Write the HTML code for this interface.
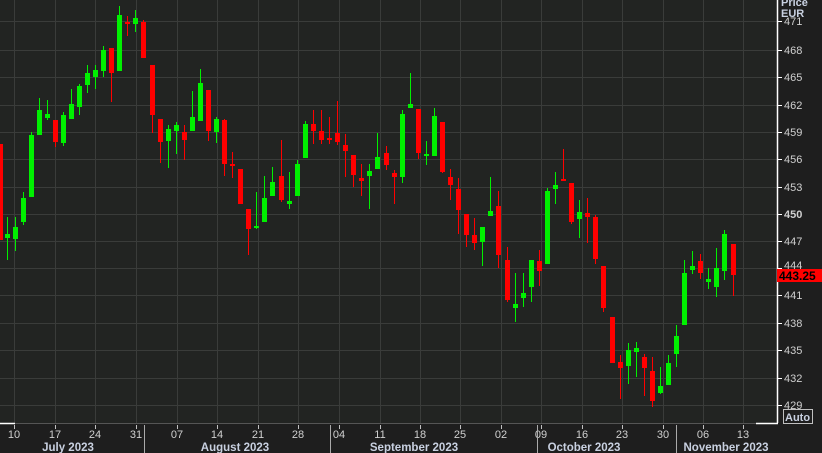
<!DOCTYPE html>
<html><head><meta charset="utf-8"><style>
html,body{margin:0;padding:0;background:#1e1e1e;overflow:hidden}
body{width:822px;height:453px;position:relative;font-family:"Liberation Sans","DejaVu Sans",sans-serif}
svg{position:absolute;left:0;top:0}
</style></head><body>
<svg id="s" width="822" height="453" xmlns="http://www.w3.org/2000/svg">
<rect x="0" y="0" width="777" height="423" fill="#222422"/>
<g id="grid" stroke="#3a3c3a" stroke-width="1"></g>
<g id="c"></g>
<line x1="777.5" y1="0" x2="777.5" y2="423" stroke="#fff" stroke-width="1.5"/>
<line x1="0" y1="423.5" x2="777" y2="423.5" stroke="#555" stroke-width="1"/>
<line x1="0" y1="423.5" x2="15" y2="423.5" stroke="#fff" stroke-width="1.5"/>
<line x1="756" y1="423.5" x2="778" y2="423.5" stroke="#fff" stroke-width="1.5"/>
<g id="ax" font-size="11" fill="#d0d0d0"></g>
<text x="781" y="6" font-size="11" font-weight="bold" fill="#c8d0e0">Price</text>
<text x="781" y="17" font-size="11" font-weight="bold" fill="#c8d0e0">EUR</text>
<rect x="777" y="269" width="45" height="13" fill="#ff0000"/>
<text x="779" y="280" font-size="12" font-weight="bold" fill="#000">443.25</text>
<rect x="783.5" y="409.5" width="29" height="14" fill="none" stroke="#c0c0c0"/>
<text x="785" y="421" font-size="11" font-weight="bold" fill="#c8d0e0">Auto</text>
<g font-size="11.5" font-weight="bold" fill="#c8d0e0" text-anchor="middle">
<text x="68" y="451">July 2023</text>
<text x="235" y="451">August 2023</text>
<text x="414" y="451">September 2023</text>
<text x="584" y="451">October 2023</text>
<text x="726" y="451">November 2023</text>
</g>
</svg>
<script>
var NS="http://www.w3.org/2000/svg";
function el(p,t,a,txt){var e=document.createElementNS(NS,t);for(var k in a)e.setAttribute(k,a[k]);if(txt)e.textContent=txt;p.appendChild(e);return e;}
var grid=document.getElementById('grid'),ax=document.getElementById('ax'),c=document.getElementById('c');
var ys=[[471,21],[468,50],[465,77],[462,105],[459,132],[456,159],[453,187],[450,214],[447,241],[444,268],[441,295],[438,323],[435,350],[432,378],[429,405]];
ys.forEach(function(v){el(grid,'line',{x1:0,x2:777,y1:v[1]+.5,y2:v[1]+.5});
el(ax,'line',{x1:777,x2:782,y1:v[1]+.5,y2:v[1]+.5,stroke:'#fff'});
if(v[0]!=444)el(ax,'text',{x:784,y:v[1]+4,'font-weight':v[0]==450?'bold':'normal'},String(v[0]));
else el(ax,'text',{x:784,y:v[1]+1},'444');});
var xs=[[14,'10'],[55,'17'],[95,'24'],[136,'31'],[177,'07'],[217,'14'],[258,'21'],[298,'28'],[339,'04'],[380,'11'],[420,'18'],[460,'25'],[501,'02'],[541,'09'],[582,'16'],[622,'23'],[663,'30'],[703,'06'],[743,'13']];
xs.forEach(function(v){el(grid,'line',{x1:v[0]+.5,x2:v[0]+.5,y1:0,y2:423});
el(ax,'line',{x1:v[0]+.5,x2:v[0]+.5,y1:425,y2:429,stroke:'#c0c0c0'});
el(ax,'text',{x:v[0],y:438,'text-anchor':'middle'},v[1]);});
[144,330,537,676].forEach(function(x){el(ax,'line',{x1:x+.5,x2:x+.5,y1:425,y2:453,stroke:'#aaa'});});
var G='#00f000',R='#ff0000';
var d=[
[0,'r',144,240,144,240],[6.5,'g',234,238,217,260],[14.5,'g',227,239,217,251],[22.5,'g',198,222,192,225],[30.5,'g',135,197,132,197],[38.5,'g',110,135,98,135],[46.5,'g',114,118,100,120],[55,'r',120,142,120,147],[63,'g',115,143,112,146],[71,'g',104,119,89,119],[79,'g',86,107,84,115],[87,'g',73,85,65,93],[95,'g',70,77,65,89],[103,'g',50,71,46,77],[111,'r',48,73,48,102],[119,'g',15,71,6,71],[127,'r',22,23,16,36],[135,'g',18,24,10,32],[143,'r',22,58,20,58],[152,'r',65,115,65,133],[160,'r',119,142,119,163],[168,'g',129,141,125,168],[176,'g',125,131,122,154],[184,'r',132,140,125,160],[192,'g',117,131,91,131],[200,'g',83,121,69,121],[208,'r',90,131,90,141],[216,'g',119,132,117,143],[224,'r',120,164,119,176],[232,'r',164,166,152,178],[240,'r',169,204,169,204],[248,'r',209,229,209,255],[256,'g',226,228,192,229],[264,'g',198,222,176,222],[272,'g',182,196,167,196],[281,'r',176,200,140,202],[289,'g',201,204,172,209],[297,'g',164,196,160,196],[305,'g',124,158,121,158],[313,'r',124,131,110,144],[321,'r',131,140,110,144],[329,'r',138,140,117,144],[337,'r',133,142,101,145],[345,'r',145,151,134,177],[353,'r',155,175,155,187],[361,'r',178,181,164,196],[369,'g',171,176,164,209],[377,'g',157,169,133,169],[386,'r',153,165,146,170],[394,'r',173,177,170,204],[402,'g',114,177,110,183],[410,'g',104,108,73,108],[418,'r',109,153,109,159],[426,'g',154,156,141,165],[434,'g',116,156,108,156],[442,'r',122,172,122,173],[450,'r',177,185,169,200],[458,'r',189,210,178,234],[466,'r',214,235,214,247],[474,'r',235,243,218,250],[482,'g',227,242,227,266],[490,'g',211,216,177,216],[498,'r',206,255,191,268],[507,'r',260,300,247,302],[515,'g',304,308,273,322],[523,'g',293,298,273,307],[531,'g',260,287,260,302],[539,'r',261,271,250,286],[547,'g',191,264,188,264],[555,'g',185,189,172,204],[563,'r',179,181,149,181],[571,'r',183,222,183,224],[579,'g',212,219,200,238],[587,'r',213,217,198,243],[595,'r',217,259,215,264],[603,'r',266,308,266,312],[612,'r',317,363,317,363],[620,'r',362,368,355,399],[628,'g',350,366,343,384],[636,'g',348,352,342,377],[644,'r',357,368,354,396],[652,'r',371,401,357,407],[660,'g',386,393,367,394],[668,'g',363,385,355,385],[676,'g',336,354,325,367],[684,'g',273,325,260,325],[692,'g',266,270,251,274],[700,'r',261,273,254,279],[708,'g',279,282,268,289],[716,'g',268,287,248,297],[724,'g',234,271,230,280],[733,'r',244,275,244,296]];
d.forEach(function(k){var col=k[1]=='g'?G:R,x=Math.round(k[0]);
el(c,'rect',{x:x,y:k[4],width:1,height:Math.max(1,k[5]-k[4]),fill:col});
el(c,'rect',{x:x-2,y:k[2],width:5,height:Math.max(2,k[3]-k[2]),fill:col});});
</script>
</body></html>
